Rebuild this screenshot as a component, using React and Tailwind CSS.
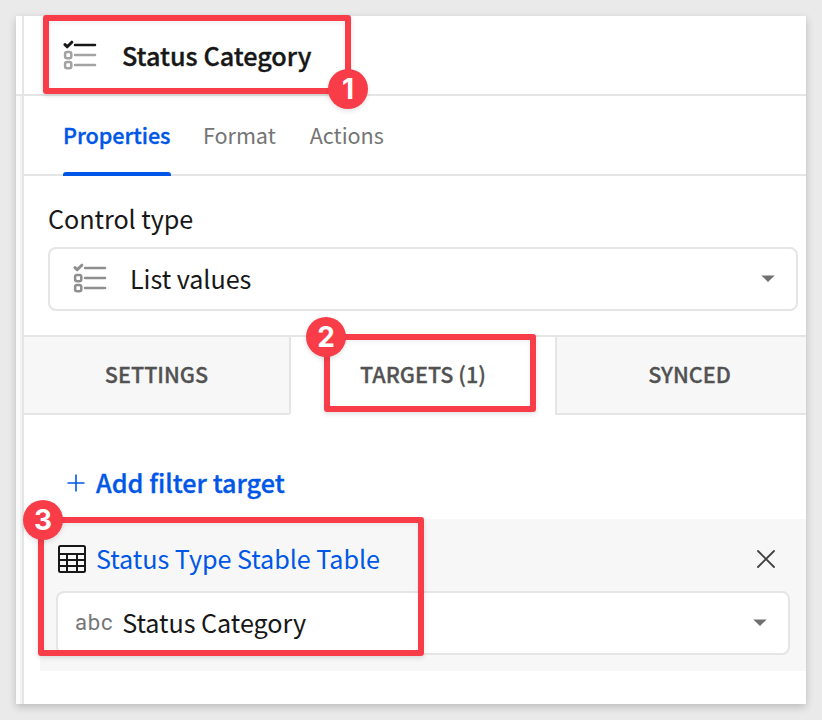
const sans = "font-['Noto_Sans_CJK_SC',sans-serif]";

function ListIcon({ check, rows }) {
  return (
    <svg width="34" height="30" viewBox="0 0 34 30" fill="none" className="shrink-0">
      <path d="M2 4.6 L4.2 6.8 L8.8 2.2" stroke={check} strokeWidth="3" strokeLinecap="round" strokeLinejoin="round" />
      <path d="M12 5 H32" stroke={check} strokeWidth="2.5" strokeLinecap="round" />
      <g stroke={rows} strokeWidth="2.5" strokeLinecap="round">
        <rect x="2.1" y="11.9" width="6.2" height="6.4" rx="2" />
        <rect x="2.1" y="21.9" width="6.2" height="6.4" rx="2" />
        <path d="M12 15 H32 M12 25 H32" />
      </g>
    </svg>
  );
}

function TableIcon() {
  return (
    <svg width="28" height="28" viewBox="0 0 28 28" fill="none" stroke="#171717" strokeWidth="2" className="shrink-0">
      <rect x="1" y="1" width="26" height="26" rx="1.5" />
      <path d="M1 9 H27 M1 15 H27 M1 21 H27 M9 9 V27 M19 9 V27" />
    </svg>
  );
}

function Caret() {
  return (
    <svg width="14" height="7" viewBox="0 0 14 7" className="relative -top-px shrink-0">
      <path d="M0.3 0.4 H13.7 L7 7 Z" fill="#707070" />
    </svg>
  );
}

function Callout({ box, badge, n }) {
  return (
    <>
      <div className={"absolute rounded-[3px] border-6 border-[#f83d49] shadow-[0_2px_5px_rgba(0,0,0,0.12),inset_0_2px_5px_rgba(0,0,0,0.06)] " + box} />
      <div className={"absolute flex size-10 items-center justify-center rounded-full bg-[#f83d49] font-[Inter,sans-serif] text-[28px] font-bold leading-none text-white shadow-[0_2px_5px_rgba(0,0,0,0.12)] " + badge}>
        {n}
      </div>
    </>
  );
}

export default function App() {
  return (
    <div className={"relative h-[720px] w-[822px] overflow-hidden bg-[#eaeaea] p-4 text-[#171717] " + sans}>
      <div className="flex h-[688px] w-[790px] flex-col bg-white shadow-[0_3px_8px_rgba(0,0,0,0.2)]">
        <div className="flex h-20 shrink-0 border-b-2 border-[#e5e5e5] pl-1.5">
          <div className="flex flex-1 items-center border-l-2 border-[#e5e5e5] pl-[39px]">
            <ListIcon check="#171717" rows="#a3a3a3" />
            <span className="ml-[25px] text-[25.2px] font-medium leading-9 [-webkit-text-stroke:0.35px]">Status Category</span>
          </div>
        </div>

        <div className="flex flex-1">
          <div className="flex w-2 shrink-0 border-r-2 border-[#e5e5e5] bg-[#fafafa] pl-1">
            <div className="w-0.5 bg-[#f2f2f2]" />
          </div>
          <div className="flex flex-1 flex-col">
            <div className="flex h-20 shrink-0 border-b-2 border-[#e5e5e5] pl-[39px] text-[21.6px] leading-8 tracking-[-0.05px] text-[#757575]">
              <div className="relative h-20 w-[108px] pt-[23px] font-medium text-[#0057e7] [-webkit-text-stroke:0.35px]">
                Properties
                <div className="absolute bottom-0 left-0 h-1 w-full rounded-t-[3px] bg-[#0057e7]" />
              </div>
              <div className="ml-8 pt-[23px]">Format</div>
              <div className="ml-[34px] pt-[23px]">Actions</div>
            </div>

            <div className="h-[159px] shrink-0 pl-6 pr-2 pt-6">
              <div className="h-[47px] text-[25.2px] leading-9 tracking-[-0.06px]">Control type</div>
              <div className="flex h-16 items-center rounded-lg border-2 border-[#e5e5e5] pl-[23px] pr-[21px]">
                <div className="pb-0.5">
                  <ListIcon check="#8f8f8f" rows="#8f8f8f" />
                </div>
                <span className="ml-[23px] flex-1 pb-0.5 text-[25.2px] leading-9 tracking-[-0.06px]">List values</span>
                <Caret />
              </div>
            </div>

            <div className="flex h-20 shrink-0 border-t-2 border-[#e5e5e5] text-[21.6px] font-medium leading-8 text-[#525252] [-webkit-text-stroke:0.3px]">
              <div className="flex w-[267px] items-center justify-center rounded-br-[3px] border-b-2 border-r-2 border-[#e5e5e5] bg-[#f7f7f7] pb-0.5">SETTINGS</div>
              <div className="flex w-[264px] items-center justify-center pb-1">TARGETS (1)</div>
              <div className="flex flex-1 items-center justify-center border-b-2 border-l-2 border-[#e5e5e5] bg-[#f7f7f7] pb-0.5 pl-4">SYNCED</div>
            </div>

            <div className="flex h-[104px] shrink-0 items-center pl-[43px] pt-[31px] text-[#0057e7]">
              <svg width="18" height="18" viewBox="0 0 18 18" stroke="currentColor" strokeWidth="1.6">
                <path d="M0.5 9 H17.5 M9 0.5 V17.5" />
              </svg>
              <span className="ml-[11px] pb-0.5 text-[25.2px] font-medium leading-9 tracking-[0.03px] [-webkit-text-stroke:0.35px]">Add filter target</span>
            </div>

            <div className="ml-4 h-[152px] bg-[#f7f7f7] pl-4 pr-4">
              <div className="flex h-[72px] items-center pl-0.5 pr-[15px] pt-2">
                <TableIcon />
                <span className="ml-2.5 flex-1 pb-0.5 text-[25.2px] leading-9 tracking-[-0.06px] text-[#0057e7]">Status Type Stable Table</span>
                <svg width="18" height="18" viewBox="0 0 18 18" stroke="#404040" strokeWidth="1.8" strokeLinecap="round">
                  <path d="M1 1 L17 17 M17 1 L1 17" />
                </svg>
              </div>
              <div className="flex h-16 items-center rounded-lg border-2 border-[#e5e5e5] bg-white pl-[17px] pr-[21px]">
                <span className="font-[Roboto,sans-serif] text-[22px] leading-8 tracking-[0.8px] text-[#757575]">abc</span>
                <span className="ml-[9px] flex-1 pb-0.5 text-[25.2px] leading-9 tracking-[-0.06px]">Status Category</span>
                <Caret />
              </div>
            </div>
          </div>
        </div>
      </div>

      <Callout n="1" box="left-[43px] top-[15px] h-[79px] w-[308px]" badge="left-[328px] top-[69px]" />
      <Callout n="2" box="left-[324px] top-[334px] h-[78px] w-[212px]" badge="left-[306px] top-[317px]" />
      <Callout n="3" box="left-[38px] top-[517px] h-[139px] w-[386px]" badge="left-[23px] top-[500px]" />
    </div>
  );
}
